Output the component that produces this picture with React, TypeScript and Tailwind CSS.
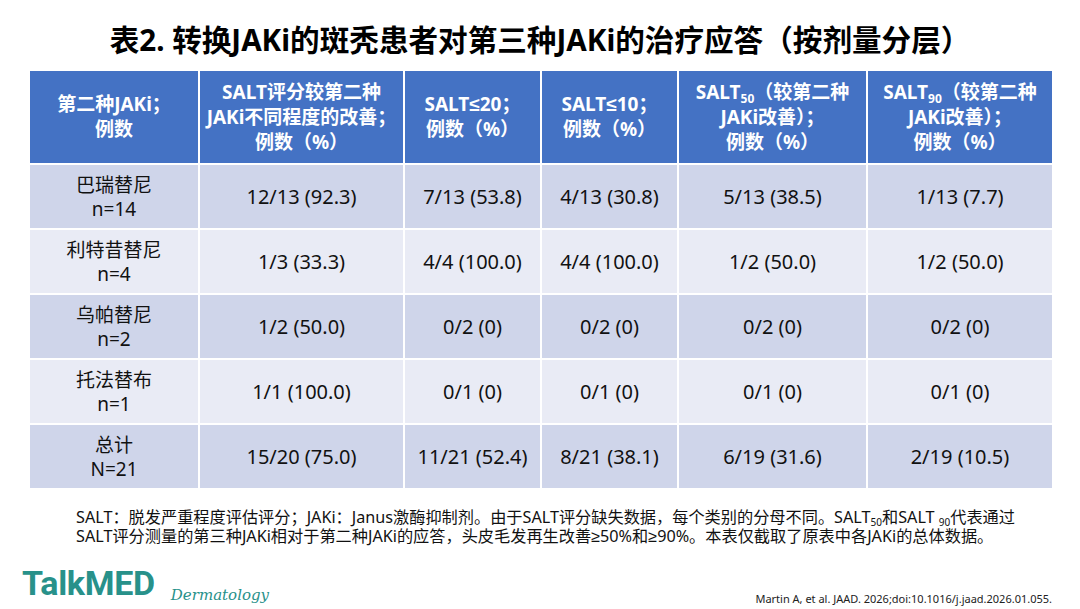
import React from "react";

type Row = { name: string; n: string; cells: string[] };

const rows: Row[] = [
  { name: "巴瑞替尼", n: "n=14", cells: ["12/13 (92.3)", "7/13 (53.8)", "4/13 (30.8)", "5/13 (38.5)", "1/13 (7.7)"] },
  { name: "利特昔替尼", n: "n=4", cells: ["1/3 (33.3)", "4/4 (100.0)", "4/4 (100.0)", "1/2 (50.0)", "1/2 (50.0)"] },
  { name: "乌帕替尼", n: "n=2", cells: ["1/2 (50.0)", "0/2 (0)", "0/2 (0)", "0/2 (0)", "0/2 (0)"] },
  { name: "托法替布", n: "n=1", cells: ["1/1 (100.0)", "0/1 (0)", "0/1 (0)", "0/1 (0)", "0/1 (0)"] },
  { name: "总计", n: "N=21", cells: ["15/20 (75.0)", "11/21 (52.4)", "8/21 (38.1)", "6/19 (31.6)", "2/19 (10.5)"] },
];

// narrow ≤ / ≥ like the slide font, instead of the wide CJK glyph
function Sym({ c }: { c: string }) {
  return <span style={{ fontFamily: '"Liberation Sans", sans-serif' }}>{c}</span>;
}

function HeadCell({ children }: { children: React.ReactNode }) {
  return (
    <div className="bg-[#4472c4] flex items-center justify-center text-center text-white font-bold text-[19px] leading-[25px] whitespace-nowrap">
      <div>{children}</div>
    </div>
  );
}

function App() {
  return (
    <div
      className="w-[1080px] h-[609px] bg-white overflow-hidden flex flex-col"
      style={{ fontFamily: '"Noto Sans", "Noto Sans CJK SC", sans-serif' }}
    >
      <h1 className="pt-[20px] text-center text-[29.6px] leading-[40px] font-bold text-black">
        表2. 转换JAKi的斑秃患者对第三种JAKi的治疗应答（按剂量分层）
      </h1>

      <div className="ml-[30px] mt-[11px] w-[1022px] grid grid-cols-[168px_203px_135px_135px_187px_184px] grid-rows-[92px_63px_63px_63px_63px_63px] gap-[2px] bg-white">
        <HeadCell>
          第二种JAKi；
          <br />
          例数
        </HeadCell>
        <HeadCell>
          SALT评分较第二种
          <br />
          JAKi不同程度的改善；
          <br />
          例数（%）
        </HeadCell>
        <HeadCell>
          SALT<Sym c="≤" />20；
          <br />
          例数（%）
        </HeadCell>
        <HeadCell>
          SALT<Sym c="≤" />10；
          <br />
          例数（%）
        </HeadCell>
        <HeadCell>
          SALT<span className="text-[12px] leading-none relative top-[4px]">50</span>（较第二种
          <br />
          JAKi改善）；
          <br />
          例数（%）
        </HeadCell>
        <HeadCell>
          SALT<span className="text-[12px] leading-none relative top-[4px]">90</span>（较第二种
          <br />
          JAKi改善）；
          <br />
          例数（%）
        </HeadCell>

        {rows.map((r, i) => {
          const bg = i % 2 === 0 ? "bg-[#cfd5ea]" : "bg-[#e9ebf5]";
          return (
            <React.Fragment key={r.name}>
              <div className={`${bg} flex flex-col items-center justify-center text-[19px] leading-[24px] text-[#111]`}>
                <span>{r.name}</span>
                <span>{r.n}</span>
              </div>
              {r.cells.map((c, j) => (
                <div key={j} className={`${bg} flex items-center justify-center text-[20px] text-[#111] whitespace-nowrap`}>
                  {c}
                </div>
              ))}
            </React.Fragment>
          );
        })}
      </div>

      <p className="mt-[20px] pl-[76px] text-[16.2px] leading-[19px] text-[#111] whitespace-nowrap">
        SALT：脱发严重程度评估评分；JAKi：Janus激酶抑制剂。由于SALT评分缺失数据，每个类别的分母不同。SALT
        <span className="text-[10px] leading-none relative top-[3px]">50</span>和SALT{" "}
        <span className="text-[10px] leading-none relative top-[3px]">90</span>代表通过
        <br />
        SALT评分测量的第三种JAKi相对于第二种JAKi的应答，头皮毛发再生改善<Sym c="≥" />50%和<Sym c="≥" />90%。本表仅截取了原表中各JAKi的总体数据。
      </p>

      <div className="mt-[20px] flex items-end justify-between pl-[22px] pr-[28px]">
        <div className="flex items-end gap-[16px]">
          <span
            className="text-[34px] leading-[34px] font-bold text-[#28918a] tracking-[-0.3px]"
            style={{ fontFamily: "Roboto, sans-serif" }}
          >
            TalkMED
          </span>
          <span
            className="text-[15px] leading-[18px] italic text-[#28918a] mb-[-4px]"
            style={{ fontFamily: '"DejaVu Serif", serif' }}
          >
            Dermatology
          </span>
        </div>
        <span className="text-[11px] leading-[14px] text-[#222] mb-[-6px]">
          Martin A, et al. JAAD. 2026;doi:10.1016/j.jaad.2026.01.055.
        </span>
      </div>
    </div>
  );
}

export default App;
